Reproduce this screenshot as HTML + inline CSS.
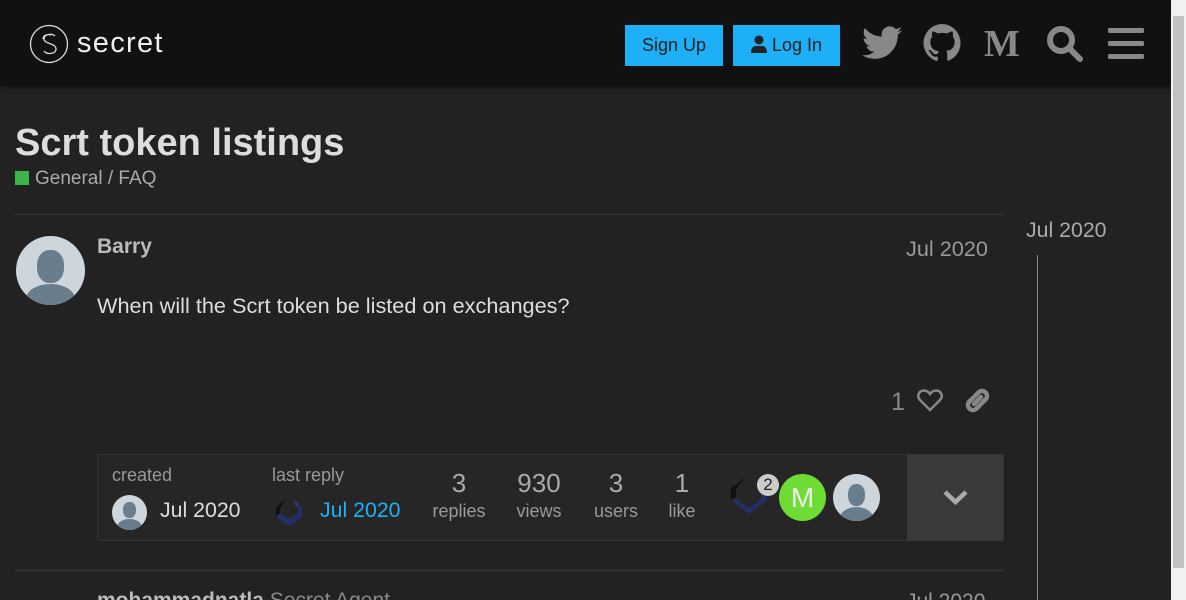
<!DOCTYPE html>
<html style="overflow:hidden"><head><meta charset="utf-8"><style>
*{margin:0;padding:0;box-sizing:border-box}
html,body{width:1186px;height:600px;overflow:hidden}
body{background:#222;font-family:"Liberation Sans",sans-serif;color:#ddd;position:relative}
.hdr{position:absolute;left:0;top:0;width:1171px;height:86px;background:#111;box-shadow:0 2px 4px rgba(0,0,0,.4)}
.sb{position:absolute;left:1171px;top:0;width:15px;height:600px;background:#f1f1f1}
.sb div{position:absolute;left:2px;top:16px;width:11px;height:552px;background:#c1c1c1}
.btn{position:absolute;top:25px;height:41px;background:#1eb0f7;color:#222;font-size:18px;line-height:41px;text-align:center}
.abs{position:absolute;white-space:nowrap}
.av{position:absolute;border-radius:50%;background:#cdd6dc;overflow:hidden}
.gray{color:#999}
</style></head><body>
<div class="hdr">
 <svg class="abs" style="left:29px;top:24px" width="40" height="40" viewBox="0 0 40 40"><circle cx="20" cy="20" r="18.5" fill="none" stroke="#ddd" stroke-width="1.3"/><path d="M26 12c-3-3-11-2-11 3 0 5 12 4 12 10 0 5-9 6-12 2M22 11c-3-1-8 0-8 4" fill="none" stroke="#ddd" stroke-width="1.3"/></svg>
 <div class="abs" style="left:77px;top:27px;font-size:29px;color:#eee;letter-spacing:1.3px">secret</div>
 <div class="btn" style="left:625px;width:98px">Sign Up</div>
 <div class="btn" style="left:733px;width:107px"><svg width="16" height="18" viewBox="0 0 16 18" style="vertical-align:-2px"><circle cx="8" cy="5" r="4.5" fill="#222"/><path d="M0 18c0-6 3-7 5-7h6c2 0 5 1 5 7z" fill="#222"/></svg> Log In</div>
 <svg class="abs" style="left:862px;top:25px" width="40" height="36" viewBox="0 0 24 20"><path fill="#888" d="M24 2.4c-.9.4-1.8.6-2.8.8 1-.6 1.8-1.6 2.2-2.7-1 .6-2 1-3.1 1.2A4.9 4.9 0 0 0 11.900 6.2 14 14 0 0 1 1.7 1 4.9 4.9 0 0 0 3.2 7.6c-.8 0-1.6-.2-2.2-.6 0 2.4 1.7 4.4 3.9 4.800-.7.2-1.5.2-2.2.1.6 2 2.4 3.4 4.6 3.4A9.9 9.9 0 0 1 0 17.3 14 14 0 0 0 7.5 19.5c9.1 0 14-7.5 14-14v-.6c1-.7 1.8-1.6 2.5-2.5z"/></svg>
 <svg class="abs" style="left:923px;top:24px" width="39" height="38" viewBox="0 0 16 16"><path fill="#888" d="M8 0a8 8 0 0 0-2.5 15.6c.4 0 .5-.2.5-.4v-1.5c-2.2.5-2.700-1-2.700-1-.4-.9-.9-1.200-.9-1.200-.7-.5.1-.5.1-.5.8.1 1.2.8 1.2.8.7 1.3 1.9.9 2.3.7.1-.5.3-.9.5-1.1-1.8-.2-3.6-.9-3.6-4 0-.9.3-1.6.8-2.1-.1-.2-.4-1 .1-2.1 0 0 .7-.2 2.2.8a7.5 7.5 0 0 1 4 0c1.5-1 2.2-.8 2.2-.8.4 1.1.2 1.9.1 2.1.5.6.8 1.3.8 2.1 0 3.1-1.9 3.7-3.6 3.9.3.3.5.8.5 1.5v2.2c0 .2.1.5.6.4A8 8 0 0 0 8 0z"/></svg>
 <div class="abs" style="left:984px;top:22px;font-family:'Liberation Serif',serif;font-weight:bold;font-size:38px;color:#888">M</div>
 <svg class="abs" style="left:1045px;top:24px" width="40" height="40" viewBox="0 0 40 40"><circle cx="16" cy="16" r="11" fill="none" stroke="#888" stroke-width="6"/><path d="M24 24l11 11" stroke="#888" stroke-width="6" stroke-linecap="round"/></svg>
 <svg class="abs" style="left:1108px;top:28px" width="36" height="31" viewBox="0 0 36 31"><rect y="0" width="36" height="5" rx="1.5" fill="#888"/><rect y="13" width="36" height="5" rx="1.5" fill="#888"/><rect y="26" width="36" height="5" rx="1.5" fill="#888"/></svg>
</div>
<div class="sb"><div></div></div>
<div class="abs" style="left:15px;top:122px;font-size:38px;font-weight:bold;color:#ddd">Scrt token listings</div>
<div class="abs" style="left:15px;top:171px;width:14px;height:14px;background:#3ab54a"></div>
<div class="abs gray" style="left:35px;top:168px;font-size:19px;color:#aaa">General / FAQ</div>
<div class="abs" style="left:15px;top:214px;width:989px;height:1px;background:#383838"></div>
<div class="abs" style="left:15px;top:570px;width:989px;height:1px;background:#383838"></div>
<div class="av" style="left:16px;top:236px;width:69px;height:69px"><div class="abs" style="left:21px;top:14px;width:27px;height:33px;border-radius:45%;background:#6a7d8c"></div><div class="abs" style="left:10px;top:48px;width:49px;height:30px;border-radius:50%;background:#6a7d8c"></div></div>
<div class="abs" style="left:97px;top:235px;font-size:21px;font-weight:bold;color:#bbb">Barry</div>
<div class="abs gray" style="left:906px;top:236px;font-size:21.7px">Jul 2020</div>
<div class="abs" style="left:97px;top:293px;font-size:21.7px;color:#ddd">When will the Scrt token be listed on exchanges?</div>
<div class="abs gray" style="left:891px;top:388px;font-size:25px;color:#888">1</div>
<svg class="abs" style="left:917px;top:388px" width="26" height="24" viewBox="0 0 26 24"><path d="M13 22L3 12C0 9 1 3 6.5 2.5 9.5 2.300 12 4.5 13 6c1-1.5 3.5-3.7 6.5-3.5C25 3 26 9 23 12z" fill="none" stroke="#888" stroke-width="2.5"/></svg>
<svg class="abs" style="left:964px;top:387px" width="27" height="27" viewBox="0 0 27 27"><g fill="none" stroke="#888" stroke-width="4.5" stroke-linecap="round"><path d="M11 9l4-4a5 5 0 0 1 7 7l-4 4"/><path d="M16 18l-4 4a5 5 0 0 1-7-7l4-4"/><path d="M10 17l7-7"/></g></svg>
<div class="abs" style="left:97px;top:454px;width:907px;height:87px;background:#262626;border:1px solid #333"></div>
<div class="abs" style="left:907px;top:455px;width:96px;height:85px;background:#3a3a3a"></div>
<svg class="abs" style="left:942px;top:488px" width="27" height="18" viewBox="0 0 27 18"><path d="M3 4l10.5 10L24 4" fill="none" stroke="#aaa" stroke-width="4.5"/></svg>
<div class="abs gray" style="left:112px;top:465px;font-size:18px">created</div>
<div class="av" style="left:112px;top:495px;width:35px;height:35px"><div class="abs" style="left:11px;top:7px;width:13px;height:16px;border-radius:45%;background:#6a7d8c"></div><div class="abs" style="left:5px;top:24px;width:25px;height:16px;border-radius:50%;background:#6a7d8c"></div></div>
<div class="abs" style="left:160px;top:498px;font-size:21.3px;color:#ddd">Jul 2020</div>
<div class="abs gray" style="left:272px;top:465px;font-size:18px">last reply</div>
<svg class="abs" style="left:274px;top:497px" width="30" height="30" viewBox="0 0 30 30"><path d="M12 2L2 10v10l4-3V11z" fill="#111"/><path d="M2 20l13 9 13-9v-10l-4 -3v9l-9 6-9-6z" fill="#223066"/><path d="M19 2l6 5-3 3z" fill="#2e3d80"/></svg>
<div class="abs" style="left:320px;top:498px;font-size:21.3px;color:#1eb0f7">Jul 2020</div>
<div class="abs" style="left:431px;top:468px;width:56px;text-align:center;font-size:26px;color:#aaa">3</div>
<div class="abs gray" style="left:431px;top:501px;width:56px;text-align:center;font-size:18px">replies</div>
<div class="abs" style="left:511px;top:468px;width:56px;text-align:center;font-size:26px;color:#aaa">930</div>
<div class="abs gray" style="left:511px;top:501px;width:56px;text-align:center;font-size:18px">views</div>
<div class="abs" style="left:588px;top:468px;width:56px;text-align:center;font-size:26px;color:#aaa">3</div>
<div class="abs gray" style="left:588px;top:501px;width:56px;text-align:center;font-size:18px">users</div>
<div class="abs" style="left:654px;top:468px;width:56px;text-align:center;font-size:26px;color:#aaa">1</div>
<div class="abs gray" style="left:654px;top:501px;width:56px;text-align:center;font-size:18px">like</div>
<svg class="abs" style="left:729px;top:476px" width="40" height="42" viewBox="0 0 40 42"><path d="M16 2L2 12v12l5-3V13z" fill="#111"/><path d="M2 24l18 14 18-14V14l-6 4v5l-12 9-12-9z" fill="#223066"/></svg>
<div class="abs" style="left:757px;top:474px;width:22px;height:22px;border-radius:50%;background:#ccc;color:#222;font-size:17px;text-align:center;line-height:22px">2</div>
<div class="abs" style="left:779px;top:474px;width:47px;height:47px;border-radius:50%;background:#6fdc35;color:#eee;font-size:28px;text-align:center;line-height:47px">M</div>
<div class="av" style="left:833px;top:474px;width:47px;height:47px"><div class="abs" style="left:15px;top:10px;width:17px;height:22px;border-radius:45%;background:#6a7d8c"></div><div class="abs" style="left:7px;top:33px;width:33px;height:22px;border-radius:50%;background:#6a7d8c"></div></div>
<div class="abs" style="left:97px;top:589px;font-size:21px;font-weight:bold;color:#bbb">mohammadnatla <span style="font-weight:normal;color:#888">Secret Agent</span></div>
<div class="abs gray" style="left:906px;top:590px;font-size:21px">Jul 2020</div>
<div class="abs gray" style="left:1026px;top:218px;font-size:21.3px;color:#aaa">Jul 2020</div>
<div class="abs" style="left:1037px;top:255px;width:1px;height:345px;background:#888"></div>
</body></html>
